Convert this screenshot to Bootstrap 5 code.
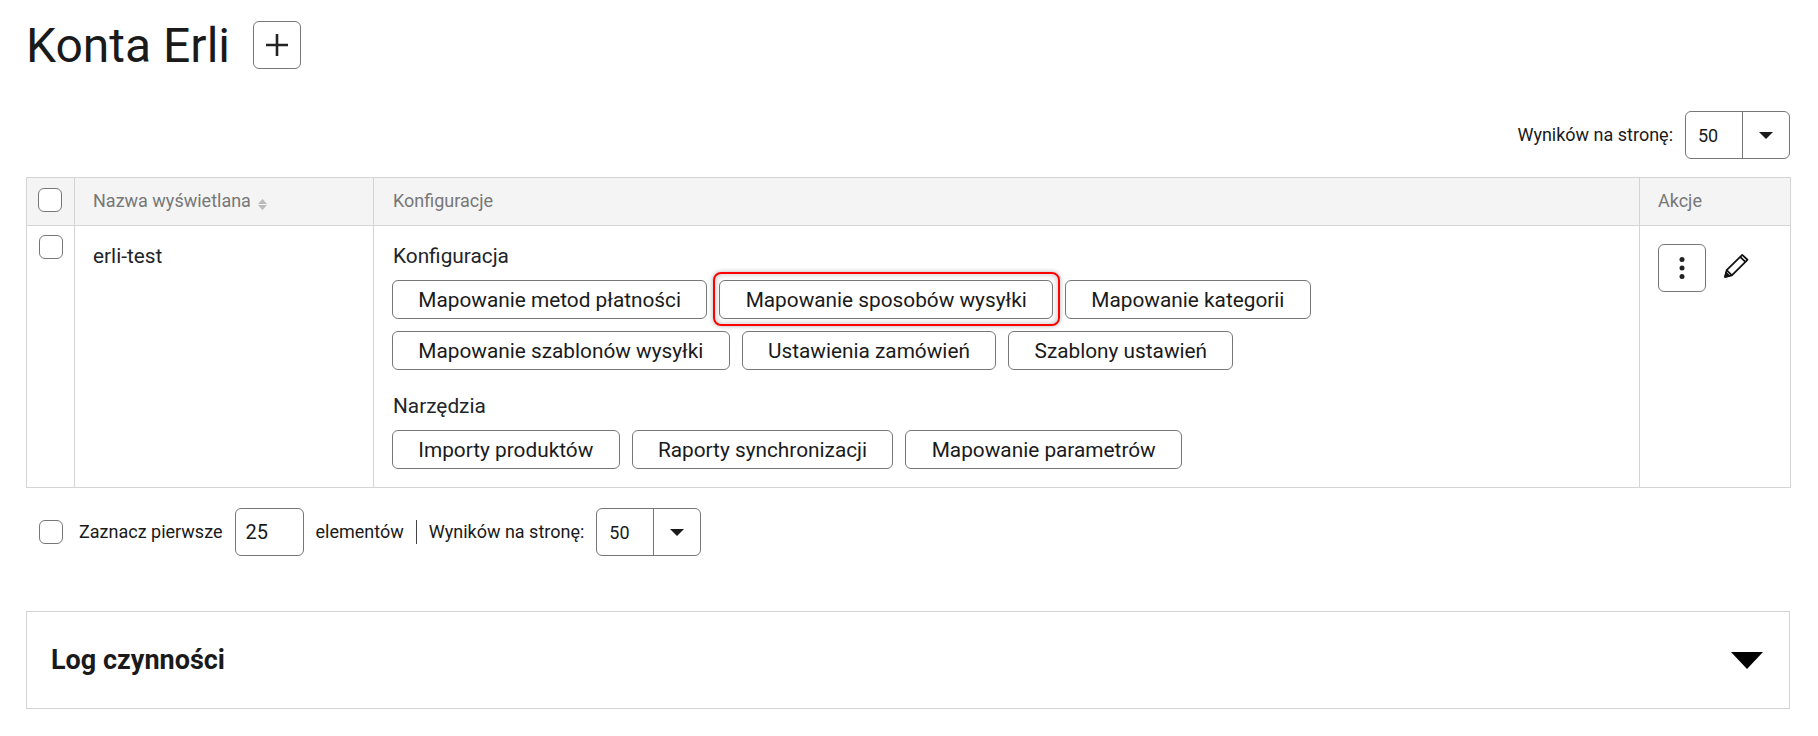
<!DOCTYPE html>
<html lang="pl">
<head>
<meta charset="utf-8">
<title>Konta Erli</title>
<link href="https://cdn.jsdelivr.net/npm/bootstrap@5.3.0/dist/css/bootstrap.min.css" rel="stylesheet">
<style>
body{font-family:Roboto,"Liberation Sans",sans-serif;color:#1a1a1a;background:#fff;font-size:18px;}
.page-wrap{padding:0 28px 0 26px;}
.title-row{height:90px;padding-top:21px;}
.page-title{font-size:48px;font-weight:400;line-height:50px;margin:0 23px 0 0;}
.sq-btn{width:48px;height:48px;padding:0;border:1px solid #777;border-radius:6px;background:#fff;display:inline-flex;align-items:center;justify-content:center;}
.top-row{height:87px;padding-top:21px;}
.sel-box{display:flex;height:48px;border:1px solid #777;border-radius:6px;background:#fff;align-items:stretch;}
.sel-val{width:57px;padding-left:12px;border-right:1px solid #777;display:flex;align-items:center;}
.sel-caret{width:46px;display:flex;align-items:center;justify-content:center;}
.caret-shape{width:0;height:0;border-left:7px solid transparent;border-right:7px solid transparent;border-top:7px solid #1a1a1a;}
.erli-table{width:1764px;table-layout:fixed;margin:0;border-color:#d4d4d4;}
.erli-table>:not(caption)>*>*{border-color:#d4d4d4;padding:0 0 0 18px;background:transparent;box-shadow:none;color:inherit;}
.erli-table th{background:#f4f4f4;color:#777;font-weight:400;height:48px;vertical-align:middle;padding-bottom:2px!important;}
.erli-table th .sort-ic{margin-left:3px;vertical-align:-3px;}
.erli-table td{vertical-align:top;height:262px;}
.box{width:24px;height:24px;border:1px solid #777;border-radius:6px;background:#fff;display:block;margin:0;appearance:none;}
.erli-table th.cb-col{padding-left:11px;padding-bottom:4px!important;}
.erli-table td.cb-col{padding-left:12px;padding-top:9px;}
.name-cell{font-size:20.8px;padding-top:18px!important;line-height:24px;}
.sec-label{font-size:20.8px;line-height:24px;margin-left:1px;}
.cfg-cell{padding-top:18px!important;}
.erli-table th.cfg-head{padding-left:19px;}
.btn-row{display:flex;flex-wrap:wrap;gap:12px;margin-top:12px;width:1000px;}
.map-btn{height:39px;padding:0 25.3px;border:1px solid #777;border-radius:6px;background:#fff;color:#1a1a1a;font-size:20.8px;line-height:36px;}
.map-btn:hover{background:#fff;color:#1a1a1a;border-color:#777;}
.hilite{position:relative;}
.hilite::after{content:"";position:absolute;inset:-9px -8px -8px -7px;border:2px solid #f00;border-radius:8px;box-shadow:0 0 5px rgba(0,0,0,.3),inset 0 0 6px rgba(0,0,0,.25);pointer-events:none;}
.tools-label{margin-top:24px;}
.actions-cell{padding-top:18px!important;}
.pencil-ic{margin-left:17px;margin-top:9px;}
.bottom-row{height:123px;padding:20px 0 0 13px;gap:0;align-items:flex-start;}
.bottom-row>*{flex:none;}
.bottom-row .txt{line-height:48px;}
.bottom-row .box{margin-top:12px;margin-right:16px;}
.num-box{width:69px;height:48px;border:1px solid #777;border-radius:6px;padding:0 0 0 9px;font-size:20px;line-height:46px;margin:0 11px 0 13px;}
.v-sep{width:1px;height:24px;background:#444;margin:12px 12px 0;}
.sel-gap{margin-left:12px;}
.log-card{width:1764px;height:98px;border:1px solid #d4d4d4;border-radius:0;padding:0 26px 0 24px;flex-direction:row;align-items:center;justify-content:space-between;}
.log-title{font-size:27px;font-weight:700;margin:0;letter-spacing:0;}
.log-caret{width:0;height:0;border-left:16px solid transparent;border-right:16px solid transparent;border-top:17px solid #000;}
</style>
</head>
<body>
<div class="page-wrap">
  <div class="d-flex align-items-start title-row">
    <h1 class="page-title">Konta Erli</h1>
    <button class="sq-btn" type="button" aria-label="Dodaj">
      <svg width="22" height="22" viewBox="0 0 22 22" fill="none" stroke="#222" stroke-width="2.600"><path d="M11 0v22M0 11h22"/></svg>
    </button>
  </div>
  <div class="d-flex justify-content-end align-items-start top-row">
    <span class="me-2 pe-1" style="line-height:48px">Wyników na stronę:</span>
    <div class="sel-box"><div class="sel-val">50</div><div class="sel-caret"><span class="caret-shape"></span></div></div>
  </div>
  <table class="table table-bordered erli-table">
    <colgroup><col style="width:48px"><col style="width:299px"><col style="width:1266px"><col style="width:151px"></colgroup>
    <thead>
      <tr>
        <th class="cb-col"><input class="box" type="checkbox" aria-label="Zaznacz"></th>
        <th>Nazwa wyświetlana <svg class="sort-ic" width="9" height="11" viewBox="0 0 9 11" fill="#bbb"><path d="M4.5 0 9 5H0zM0 6h9l-4.500 5z"/></svg></th>
        <th class="cfg-head">Konfiguracje</th>
        <th>Akcje</th>
      </tr>
    </thead>
    <tbody>
      <tr>
        <td class="cb-col"><input class="box" type="checkbox" aria-label="Zaznacz"></td>
        <td class="name-cell">erli-test</td>
        <td class="cfg-cell">
          <div class="sec-label">Konfiguracja</div>
          <div class="btn-row">
            <button class="btn map-btn" type="button">Mapowanie metod płatności</button>
            <button class="btn map-btn hilite" type="button">Mapowanie sposobów wysyłki</button>
            <button class="btn map-btn" type="button">Mapowanie kategorii</button>
            <button class="btn map-btn" type="button">Mapowanie szablonów wysyłki</button>
            <button class="btn map-btn" type="button">Ustawienia zamówień</button>
            <button class="btn map-btn" type="button">Szablony ustawień</button>
          </div>
          <div class="sec-label tools-label">Narzędzia</div>
          <div class="btn-row">
            <button class="btn map-btn" type="button">Importy produktów</button>
            <button class="btn map-btn" type="button">Raporty synchronizacji</button>
            <button class="btn map-btn" type="button">Mapowanie parametrów</button>
          </div>
        </td>
        <td class="actions-cell">
          <div class="d-flex align-items-start">
            <button class="sq-btn" type="button" aria-label="Więcej">
              <svg width="6" height="24" viewBox="0 0 6 24" fill="#222"><circle cx="3" cy="3.500" r="2.500"/><circle cx="3" cy="12" r="2.500"/><circle cx="3" cy="20.500" r="2.500"/></svg>
            </button>
            <svg class="pencil-ic" width="26" height="26" viewBox="0 0 25 25" fill="none" stroke="#111" stroke-width="1.700" stroke-linejoin="round"><path d="M2 23l1.500-6.500L18.500 1.800l5 4.700L8.500 21.500z"/><path d="M16.500 3.800l5 4.800"/><path d="M3.500 16.500l5 5"/><path d="M2 23l1-4 3 3z" fill="#111"/></svg>
          </div>
        </td>
      </tr>
    </tbody>
  </table>
  <div class="d-flex bottom-row">
    <input class="box" type="checkbox" aria-label="Zaznacz pierwsze">
    <span class="txt">Zaznacz pierwsze</span>
    <div class="num-box">25</div>
    <span class="txt">elementów</span>
    <span class="v-sep"></span>
    <span class="txt">Wyników na stronę:</span>
    <div class="sel-box sel-gap"><div class="sel-val">50</div><div class="sel-caret"><span class="caret-shape"></span></div></div>
  </div>
  <div class="card log-card">
    <h2 class="log-title">Log czynności</h2>
    <span class="log-caret"></span>
  </div>
</div>
<script src="https://cdn.jsdelivr.net/npm/bootstrap@5.3.0/dist/js/bootstrap.bundle.min.js"></script>
</body>
</html>
